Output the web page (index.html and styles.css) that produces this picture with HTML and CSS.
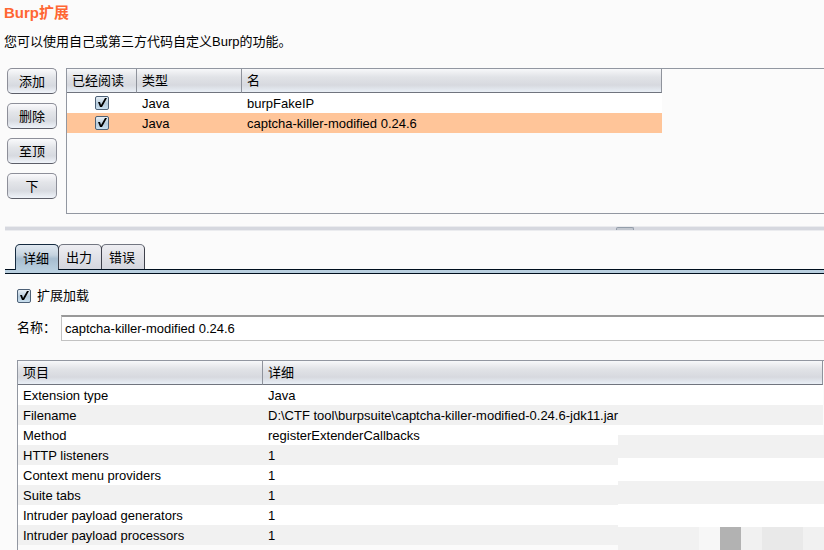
FILE: index.html
```html
<!DOCTYPE html>
<html lang="zh-CN">
<head>
<meta charset="utf-8">
<title>Burp扩展</title>
<link rel="stylesheet" href="styles.css">
</head>
<body>
<main class="page">
  <h1 class="title">Burp扩展</h1>
  <p class="intro">您可以使用自己或第三方代码自定义Burp的功能。</p>

  <section class="extensions">
    <div class="actions">
      <button class="button" type="button">添加</button>
      <button class="button" type="button">删除</button>
      <button class="button" type="button">至顶</button>
      <button class="button" type="button">下</button>
    </div>
    <div class="list-panel">
      <table class="grid list">
        <colgroup><col class="col-loaded"><col class="col-type"><col></colgroup>
        <thead><tr><th>已经阅读</th><th>类型</th><th>名</th></tr></thead>
        <tbody>
          <tr><td class="tick"><input class="check" type="checkbox" aria-label="burpFakeIP" checked></td><td>Java</td><td>burpFakeIP</td></tr>
          <tr class="selected"><td class="tick"><input class="check" type="checkbox" aria-label="captcha-killer-modified 0.24.6" checked></td><td>Java</td><td>captcha-killer-modified 0.24.6</td></tr>
        </tbody>
      </table>
    </div>
  </section>

  <div class="splitter"><span class="grip"></span></div>

  <div class="tabs" role="tablist">
    <button class="tab active" type="button" role="tab" aria-selected="true">详细</button>
    <button class="tab" type="button" role="tab" aria-selected="false">出力</button>
    <button class="tab" type="button" role="tab" aria-selected="false">错误</button>
  </div>

  <section class="details">
    <div class="loaded">
      <input class="check" type="checkbox" id="loaded" checked>
      <label for="loaded">扩展加载</label>
    </div>
    <div class="name-row">
      <label for="name">名称：</label>
      <input class="name" id="name" type="text" value="captcha-killer-modified 0.24.6">
    </div>
    <div class="info-panel">
      <table class="grid info">
        <colgroup><col class="col-item"><col></colgroup>
        <thead><tr><th>项目</th><th>详细</th></tr></thead>
        <tbody>
          <tr><td>Extension type</td><td>Java</td></tr>
          <tr><td>Filename</td><td>D:\CTF tool\burpsuite\captcha-killer-modified-0.24.6-jdk11.jar</td></tr>
          <tr><td>Method</td><td>registerExtenderCallbacks</td></tr>
          <tr><td>HTTP listeners</td><td>1</td></tr>
          <tr><td>Context menu providers</td><td>1</td></tr>
          <tr><td>Suite tabs</td><td>1</td></tr>
          <tr><td>Intruder payload generators</td><td>1</td></tr>
          <tr><td>Intruder payload processors</td><td>1</td></tr>
        </tbody>
      </table>
      <div class="mosaic">
        <div class="band"></div>
        <div class="band"></div>
        <div class="band"></div>
        <div class="band"></div>
        <div class="band blocks">
          <span class="block pale"></span><span class="block dark"></span><span class="block"></span><span class="block mid"></span><span class="block"></span>
        </div>
      </div>
    </div>
  </section>
</main>
</body>
</html>
```
FILE: styles.css
```css
* {
  box-sizing: border-box;
}

body {
  margin: 0;
  background: #fbfbfb;
  color: #000;
  font: 13px/20px "Liberation Sans", "Noto Sans CJK SC", sans-serif;
  overflow: hidden;
}

button,
input {
  font: inherit;
  color: inherit;
}

.page {
  display: flex;
  flex-direction: column;
  height: 100vh;
  padding-top: 3px;
}

.title {
  margin: 0 4px;
  color: #ff6633;
  font-size: 15px;
  line-height: 20px;
}

.intro {
  margin: 9px 4px 16px;
}

.extensions {
  display: flex;
  gap: 9px;
  padding-left: 7px;
}

.actions {
  display: flex;
  flex-direction: column;
  gap: 9px;
}

.button {
  width: 50px;
  height: 26px;
  padding: 2px 0 0;
  border: 1px solid #8d8f99;
  border-bottom-color: #5c5e68;
  border-radius: 5px;
  background: linear-gradient(#fafafc, #e3e5e9 35%, #d7dae0 70%, #f0f4fa);
}

.list-panel {
  flex: 1;
  height: 146px;
  border: solid #9297a1;
  border-width: 1px 0 1px 1px;
}

.grid {
  table-layout: fixed;
  border-collapse: separate;
  border-spacing: 0;
  background: #fff;
}

.list {
  width: 595px;
}

.col-loaded {
  width: 70px;
}

.col-type {
  width: 105px;
}

.col-item {
  width: 245px;
}

.grid th {
  height: 24px;
  padding: 0 5px;
  border-right: 1px solid #8f939c;
  border-bottom: 1px solid #70747e;
  background: linear-gradient(#f7f8fa, #e1e3e7 35%, #d7d9df 70%, #e9eff6);
  font-weight: normal;
  line-height: 22px;
  text-align: left;
  white-space: nowrap;
}

.grid td {
  height: 20px;
  padding: 2px 5px 0;
  line-height: 18px;
  white-space: nowrap;
}

.grid .tick {
  padding: 0;
}

.selected {
  background: #ffc599;
}

.check {
  appearance: none;
  display: block;
  width: 14px;
  height: 14px;
  margin: 0;
  border: 1px solid #4c6076;
  border-radius: 2px;
  background: linear-gradient(#e9f0f6, #b5cbdc 55%, #c9dfef);
}

.check:checked::before {
  content: "";
  display: block;
  width: 12px;
  height: 12px;
  background: #000;
  clip-path: polygon(2px 5px, 4px 5px, 5px 8px, 9px 1px, 11px 1px, 6px 10px, 4px 10px);
}

.tick .check {
  margin: 0 auto;
}

.splitter {
  height: 5px;
  margin: 12px 0 13px 5px;
  border: solid #ebecef;
  border-width: 1px 0;
  background: #d6d8df;
}

.grip {
  display: block;
  width: 18px;
  height: 3px;
  margin: 0 190px 0 auto;
  border: 1px solid #949eaa;
  border-bottom: 0;
  border-radius: 2px 2px 0 0;
  background: #c2c7cf;
}

.tabs {
  display: flex;
  height: 30px;
  margin-left: 5px;
  padding-left: 10px;
  background: linear-gradient(#000f1e, #000f1e) 0 25px / 100% 1px no-repeat,
    linear-gradient(#b9cfdf, #b9cfdf) 0 26px / 100% 3px no-repeat,
    linear-gradient(#000f1e, #000f1e) 0 29px / 100% 1px no-repeat;
}

.tab {
  width: 44px;
  height: 25px;
  margin-right: -1px;
  padding: 2px 2px 0 0;
  border: 1px solid #3e414b;
  border-top-color: #727681;
  border-bottom: 0;
  border-radius: 5px 5px 0 0;
  background: linear-gradient(#eeeef2, #dedfe5 60%, #d4d6de);
}

.tab.active {
  height: 26px;
  border-color: #152b40;
  background: linear-gradient(#e1e9f1, #c5d3df 40%, #a7bdcf 55%, #b9cfdf);
}

.details {
  display: flex;
  flex-direction: column;
  flex: 1;
  min-height: 0;
  padding: 12px 0 0 17px;
}

.loaded {
  display: flex;
  align-items: center;
  gap: 6px;
}

.name-row {
  display: flex;
  align-items: center;
  gap: 5px;
  margin: 9px 0 19px;
}

.name {
  flex: 1;
  height: 26px;
  padding: 0 3px;
  border: 1px solid #c2c2c2;
  border-top: 2px solid #999;
  border-right: 0;
  border-radius: 0;
  background: #fff;
}

.info-panel {
  position: relative;
  flex: 1;
  border: solid #9297a1;
  border-width: 1px 0 0 1px;
}

.info {
  width: calc(100% - 1px);
}

.info tbody tr:nth-child(even) {
  background: #f1f1f1;
}

.mosaic {
  position: absolute;
  top: 74px;
  right: 0;
  width: 206px;
}

.band {
  height: 23px;
  background: #fff;
}

.band:nth-child(odd) {
  background: #f1f1f1;
}

.blocks {
  display: flex;
  justify-content: flex-end;
}

.block {
  width: 21px;
}

.pale {
  background: #f7f7f7;
}

.dark {
  background: #b2b2b2;
}

.mid {
  width: 41px;
  background: #e9e9e9;
}
```
